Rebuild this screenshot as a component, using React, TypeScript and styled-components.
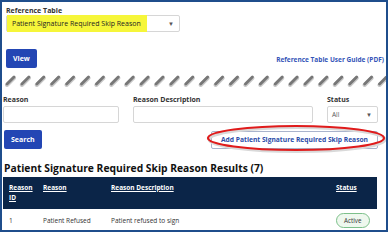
import React from "react";
import styled, { createGlobalStyle } from "styled-components";

const Global = createGlobalStyle`
  html, body { margin: 0; padding: 0; background: #fff; }
  body { font-family: "Open Sans", "Liberation Sans", sans-serif; }
  * { box-sizing: border-box; }
`;

const Frame = styled.div`
  width: 388px;
  height: 232px;
  border: 2px solid #1f4e8c;
  overflow: hidden;
  position: relative;
  color: #222;
`;

const Top = styled.div`
  padding: 4px 0 0 4px;
  display: flex;
  flex-direction: column;
`;

const Label = styled.div`
  font-size: 7px;
  font-weight: 700;
  color: #333;
  line-height: 9px;
`;

const SelectBox = styled.div<{ $w: number }>`
  width: ${(p) => p.$w}px;
  height: 17px;
  border: 1px solid #d6d6d6;
  border-radius: 2px;
  display: flex;
  align-items: center;
  justify-content: space-between;
  padding: 0 5px 0 4px;
  font-size: 7px;
  color: #222;
  background: #fff;
`;

const Highlight = styled.span`
  background: #f6f63a;
  margin-left: -4px;
  padding: 3px 6px 3px 5px;
  line-height: 11px;
`;

const Caret = styled.span`
  font-size: 6px;
  color: #555;
`;

const ViewRow = styled.div`
  display: flex;
  justify-content: space-between;
  align-items: flex-end;
  margin-top: 17px;
  padding-right: 2px;
`;

const Button = styled.button`
  background: #2346b4;
  color: #fff;
  border: none;
  border-radius: 2px;
  font-family: inherit;
  font-weight: 700;
  font-size: 7px;
  height: 19px;
  padding: 0 7px;
  cursor: pointer;
`;

const Link = styled.a`
  color: #3555b8;
  font-weight: 700;
  font-size: 6.5px;
  margin-bottom: 4px;
  text-decoration: none;
`;

const Torn = styled.svg`
  display: block;
  margin-top: 7px;
  margin-left: 2px;
`;

const Filters = styled.div`
  display: grid;
  grid-template-columns: 116px 180px 51px;
  column-gap: 14px;
  padding: 8px 0 0 1px;
  align-items: end;
`;

const Field = styled.div`
  display: flex;
  flex-direction: column;
  gap: 2px;
`;

const Input = styled.div`
  height: 17px;
  border: 1px solid #d6d6d6;
  border-radius: 2px;
  background: #fff;
`;

const ActionRow = styled.div`
  display: flex;
  justify-content: space-between;
  align-items: center;
  padding: 7px 8px 0 2px;
  position: relative;
`;

const OutlineButton = styled.button`
  background: #fff;
  border: 1px solid #aab4cc;
  border-radius: 2px;
  color: #2c4ca8;
  font-family: inherit;
  font-weight: 700;
  font-size: 6.7px;
  height: 18px;
  padding: 0 9px;
  position: relative;
`;

const Ellipse = styled.svg`
  position: absolute;
  left: 203px;
  top: 0px;
  pointer-events: none;
`;

const Heading = styled.h2`
  margin: 13px 0 0 2px;
  font-size: 10.3px;
  font-weight: 700;
  color: #111;
  line-height: 13px;
`;

const Table = styled.table`
  margin: 2px 0 0 1px;
  width: 374px;
  border-collapse: collapse;
  font-size: 6.5px;
`;

const Th = styled.th<{ $w?: number }>`
  background: #0b2548;
  color: #fff;
  text-align: left;
  font-weight: 700;
  text-decoration: underline;
  vertical-align: top;
  padding: 6px 4px 6px 6px;
  line-height: 10px;
  height: 30px;
  width: ${(p) => (p.$w ? `${p.$w}px` : "auto")};
`;

const Td = styled.td`
  padding: 4px 4px 3px 6px;
  color: #333;
  line-height: 9px;
`;

const Badge = styled.span`
  display: inline-block;
  border: 1px solid #7cc08a;
  background: #eef8ee;
  border-radius: 8px;
  padding: 2px 7px;
  font-size: 6.3px;
  color: #333;
`;

export default function App() {
  const dashes = Array.from({ length: 26 }, (_, i) => i * 14.9);
  return (
    <>
      <Global />
      <Frame>
        <Top>
          <Label>Reference Table</Label>
          <SelectBox $w={174}>
            <Highlight>Patient Signature Required Skip Reason</Highlight>
            <Caret>▼</Caret>
          </SelectBox>
          <ViewRow>
            <Button>View</Button>
            <Link>Reference Table User Guide (PDF)</Link>
          </ViewRow>
        </Top>
        <Torn width="384" height="12" viewBox="0 0 384 12">
          {dashes.map((x) => (
            <g key={x}>
              <line x1={x + 3} y1={10} x2={x + 10} y2={3} stroke="#c9c9c9" strokeWidth="4" strokeLinecap="round" />
              <line x1={x + 3} y1={9} x2={x + 10} y2={2} stroke="#777" strokeWidth="2.8" strokeLinecap="round" />
            </g>
          ))}
        </Torn>
        <Filters>
          <Field>
            <Label>Reason</Label>
            <Input />
          </Field>
          <Field>
            <Label>Reason Description</Label>
            <Input />
          </Field>
          <Field>
            <Label>Status</Label>
            <SelectBox $w={51}>
              <span style={{ color: "#555", fontSize: 6.5 }}>All</span>
              <Caret>▼</Caret>
            </SelectBox>
          </Field>
        </Filters>
        <ActionRow>
          <Button>Search</Button>
          <OutlineButton>Add Patient Signature Required Skip Reason</OutlineButton>
          <Ellipse width="182" height="30" viewBox="0 0 182 30">
            <ellipse cx="91" cy="15" rx="88" ry="12" fill="none" stroke="#d9d9d9" strokeWidth="3" transform="translate(1,1.5)" />
            <ellipse cx="91" cy="15" rx="88" ry="12" fill="none" stroke="#e01b1b" strokeWidth="2.2" />
          </Ellipse>
        </ActionRow>
        <Heading>Patient Signature Required Skip Reason Results (7)</Heading>
        <Table>
          <thead>
            <tr>
              <Th $w={34}>Reason ID</Th>
              <Th $w={68}>Reason</Th>
              <Th $w={225}>Reason Description</Th>
              <Th>Status</Th>
            </tr>
          </thead>
          <tbody>
            <tr>
              <Td>1</Td>
              <Td>Patient Refused</Td>
              <Td>Patient refused to sign</Td>
              <Td>
                <Badge>Active</Badge>
              </Td>
            </tr>
          </tbody>
        </Table>
      </Frame>
    </>
  );
}
